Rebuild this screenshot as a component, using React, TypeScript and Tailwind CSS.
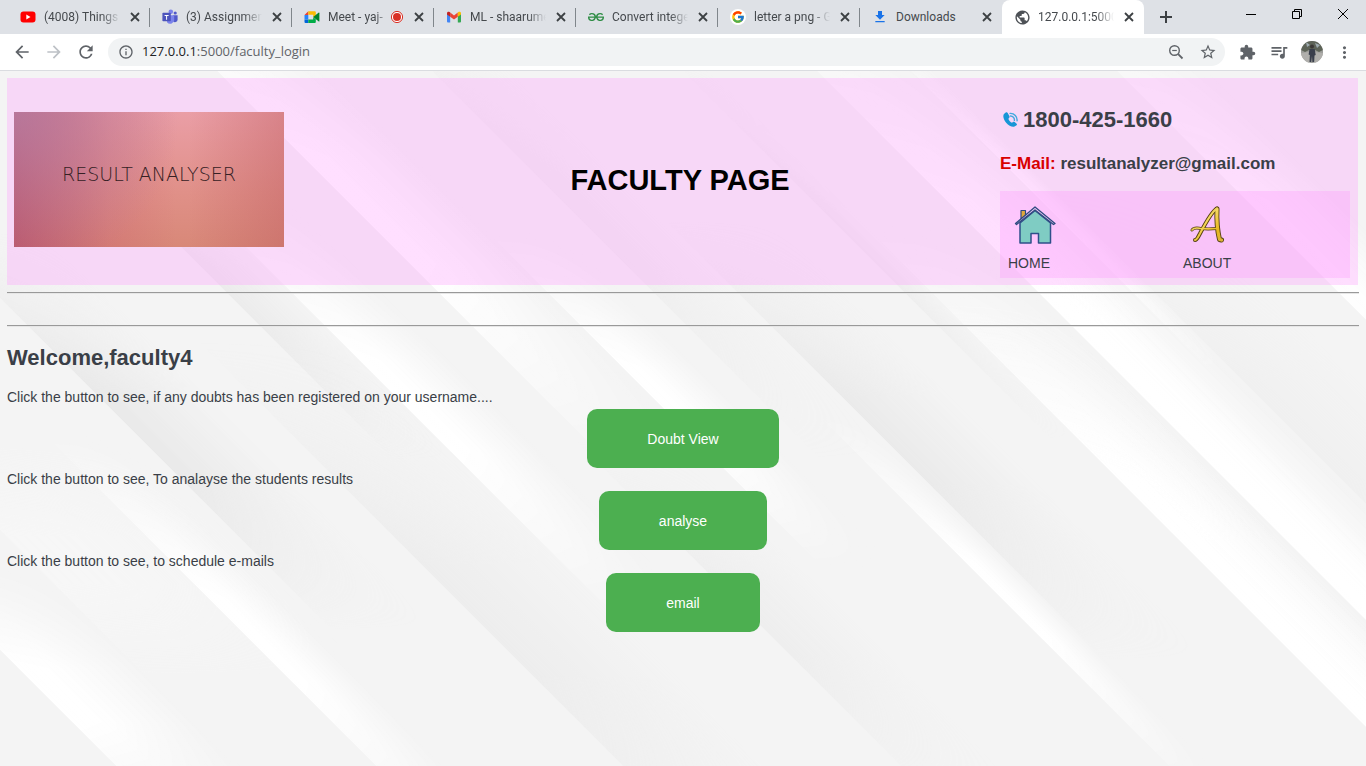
import React from "react";
import {
  MdArrowBack,
  MdArrowForward,
  MdRefresh,
  MdInfoOutline,
  MdStarBorder,
  MdExtension,
  MdQueueMusic,
  MdMoreVert,
  MdPublic,
  MdFileDownload,
} from "react-icons/md";
import { FcGoogle } from "react-icons/fc";
import { SiGeeksforgeeks } from "react-icons/si";

/* ---------- Tab icons ---------- */

const YoutubeIcon = () => (
  <svg viewBox="0 0 16 16" className="size-4">
    <rect x="0.5" y="2.5" width="15" height="11" rx="3" fill="#f00" />
    <path d="M6.3 5.6v4.8L10.5 8z" fill="#fff" />
  </svg>
);

const TeamsIcon = () => (
  <svg viewBox="0 0 16 16" className="size-4">
    <circle cx="13.2" cy="4" r="1.6" fill="#5059c9" />
    <circle cx="8.8" cy="2.8" r="2.3" fill="#7b83eb" />
    <path d="M11 6.3h4.6v4.4a2.5 2.5 0 0 1-4.6 1.3z" fill="#5059c9" />
    <path d="M5 6.3h7.2v5A4 4 0 0 1 5 13.2z" fill="#7b83eb" />
    <rect x="0.4" y="3.8" width="8.4" height="8.4" rx="0.8" fill="#4b53bc" />
    <path d="M2.6 5.9h4v1H5.1v3.8H4.1V6.9H2.6z" fill="#fff" />
  </svg>
);

const MeetIcon = () => (
  <svg viewBox="0 0 16 16" className="size-4">
    <path d="M0.5 6 4.3 2.3V6z" fill="#ea4335" />
    <path d="M4.3 2.3h6.5q1 0 1 1v3L9.2 8.4V5.8H4.3z" fill="#fbbc04" />
    <path d="M0.5 6h3.8v4.4H0.5z" fill="#2684fc" />
    <path d="M0.5 10.4h3.8v3.5H1.5q-1 0-1-1z" fill="#0066da" />
    <path d="M4.3 10.4h4.9V8.2l2.6 2v2.7q0 1-1 1H4.3z" fill="#00ac47" />
    <path d="M9.2 8.1 14.5 3.8q.9-.5.9.4v7.7q0 .9-.9.4z" fill="#00832d" />
  </svg>
);

const GmailIcon = () => (
  <svg viewBox="0 0 16 16" className="size-4">
    <path d="M1 4.2v8.2q0 1 1 1h2.2V7z" fill="#4285f4" />
    <path d="M15 4.2v8.2q0 1-1 1h-2.2V7z" fill="#34a853" />
    <path d="M4.2 3.6v4.2L8 10.6l3.8-2.8V3.6L8 6.4z" fill="#ea4335" />
    <path d="M1 5.4V4.2C1 2.6 2.6 2.3 3.6 3l.6.6v4.2z" fill="#c5221f" />
    <path d="M15 5.4V4.2c0-1.6-1.6-1.9-2.6-1.2l-.6.6v4.2z" fill="#fbbc04" />
  </svg>
);

const GoogleIcon = () => (
  <span className="flex size-4 items-center justify-center rounded-full bg-white">
    <FcGoogle className="size-[14px]" />
  </span>
);

const GlobeIcon = () => (
  <span className="flex size-4 items-center justify-center">
    <MdPublic className="size-[17px] shrink-0 text-[#4d5156]" />
  </span>
);

const RecordIcon = () => (
  <svg viewBox="0 0 14 14" className="size-[14px] shrink-0">
    <circle cx="7" cy="7" r="5.6" fill="#fff" stroke="#d93025" strokeWidth="1" />
    <circle cx="7" cy="7" r="4" fill="#d93025" />
  </svg>
);

const CloseIcon = () => (
  <svg viewBox="0 0 14 14" className="size-[14px]">
    <path d="M3 3l8 8M11 3l-8 8" stroke="#3c4043" strokeWidth="1.8" />
  </svg>
);

const ZoomOutIcon = () => (
  <svg viewBox="0 0 16 16" className="size-4" fill="none" stroke="#5f6368">
    <circle cx="6.5" cy="6.5" r="4.8" strokeWidth="1.4" />
    <path d="M4.200 6.500h4.600" strokeWidth="1.200" />
    <path d="M10.200 10.200l4.300 4.300" strokeWidth="1.800" />
  </svg>
);

type Tab = {
  title: string;
  icon: React.ReactNode;
  recording?: boolean;
  active?: boolean;
  line: boolean;
};

const tabs: Tab[] = [
  { title: "(4008) Things v", icon: <YoutubeIcon />, line: true },
  { title: "(3) Assignment", icon: <TeamsIcon />, line: true },
  { title: "Meet - yaj-", icon: <MeetIcon />, recording: true, line: true },
  { title: "ML - shaarume", icon: <GmailIcon />, line: true },
  { title: "Convert intege", icon: <SiGeeksforgeeks className="size-4 text-[#2f8d46]" />, line: true },
  { title: "letter a png - G", icon: <GoogleIcon />, line: true },
  { title: "Downloads", icon: <MdFileDownload className="size-[18px] text-[#1a73e8]" />, line: false },
  { title: "127.0.0.1:5000/", icon: <GlobeIcon />, active: true, line: false },
];

function TabStrip() {
  return (
    <div className="flex h-[34px] bg-[#dee1e6] pl-2">
      <div role="tablist" className="flex min-w-0">
        {tabs.map((t) => (
          <div
            key={t.title}
            className={
              t.active
                ? "relative flex w-[142px] min-w-0 items-center rounded-t-lg bg-white pr-2 pl-3"
                : "relative flex w-[142px] min-w-0 items-center pr-2 pl-3"
            }
          >
            <span className="mr-2 flex size-4 shrink-0 items-center justify-center">{t.icon}</span>
            <button
              role="tab"
              aria-selected={!!t.active}
              className={
                t.title === "Downloads"
                  ? "min-w-0 flex-1 text-left font-['Roboto',sans-serif] text-xs whitespace-nowrap text-[#45494d]"
                  : "min-w-0 flex-1 text-left font-['Roboto',sans-serif] text-xs whitespace-nowrap text-[#45494d] [mask-image:linear-gradient(to_right,#000_76%,transparent)]"
              }
            >
              {t.title}
            </button>
            {t.recording && <RecordIcon />}
            <button aria-label="Close tab" className="ml-2 shrink-0">
              <CloseIcon />
            </button>
            {t.line && <span className="absolute top-2 right-0 h-[19px] w-px bg-[#80868b]" />}
          </div>
        ))}
      </div>
      <button aria-label="New tab" className="ml-2 flex w-7 items-center justify-center">
        <svg viewBox="0 0 12 12" className="size-3">
          <path d="M6 0v12M0 6h12" stroke="#3c4043" strokeWidth="2" />
        </svg>
      </button>
      <div className="ml-auto flex h-7">
        <button aria-label="Minimize" className="flex w-[46px] items-center justify-center">
          <svg viewBox="0 0 10 10" className="size-[10px]">
            <path d="M0 5.5h10" stroke="#000" />
          </svg>
        </button>
        <button aria-label="Restore" className="flex w-[46px] items-center justify-center">
          <svg viewBox="0 0 10 10" className="size-[10px]" fill="none" stroke="#000">
            <path d="M0.5 2.5h7v7h-7zM2.5 2.5v-2h7v7h-2" />
          </svg>
        </button>
        <button aria-label="Close" className="flex w-[46px] items-center justify-center">
          <svg viewBox="0 0 10 10" className="size-[10px]">
            <path d="M0 0l10 10M10 0L0 10" stroke="#000" />
          </svg>
        </button>
      </div>
    </div>
  );
}

function Toolbar() {
  return (
    <div className="flex h-[37px] items-center border-b border-[#dadce0] bg-white px-3 text-[#5f6368]">
      <button aria-label="Back" className="mr-3">
        <MdArrowBack className="size-5" />
      </button>
      <button aria-label="Forward" className="mr-3 text-[#bdc1c6]">
        <MdArrowForward className="size-5" />
      </button>
      <button aria-label="Reload" className="mr-3">
        <MdRefresh className="size-5" />
      </button>
      <div className="flex h-7 min-w-0 flex-1 items-center rounded-full bg-[#f1f3f4] pr-2 pl-[10px]">
        <MdInfoOutline className="mr-2 size-4 shrink-0" />
        <a href="#address" className="min-w-0 flex-1 truncate text-[13px]">
          <span className="text-[#202124]">127.0.0.1</span>:5000/faculty_login
        </a>
        <button aria-label="Zoom" className="mr-[15px]">
          <ZoomOutIcon />
        </button>
        <button aria-label="Bookmark this page">
          <MdStarBorder className="size-[18px]" />
        </button>
      </div>
      <button aria-label="Extensions" className="ml-[14px]">
        <MdExtension className="size-[17px]" />
      </button>
      <button aria-label="Media controls" className="ml-[13px]">
        <MdQueueMusic className="size-5" />
      </button>
      <button aria-label="Profile" className="ml-3">
        <svg viewBox="0 0 22 22" className="size-[22px]">
          <defs>
            <clipPath id="avatar">
              <circle cx="11" cy="11" r="11" />
            </clipPath>
          </defs>
          <g clipPath="url(#avatar)">
            <rect width="22" height="22" fill="#9b9c99" />
            <path d="M0 0h22v9l-4 2-4-2H8l-4 2-4-2z" fill="#5d6357" />
            <path d="M5 1l4 3-3 2zM14 2l5 2-3 3z" fill="#9fabb0" />
            <path d="M0 12l8-1v11H0zM14 11l8 1v10h-8z" fill="#b0afac" />
            <circle cx="11" cy="5.5" r="2" fill="#3c3836" />
            <path d="M8.5 8h5.2l1 6-1.3.5L13 21h-1.6L11 15l-.8 6H8.6L9 14l-1.4-.4z" fill="#3a3f4c" />
          </g>
        </svg>
      </button>
      <button aria-label="Menu" className="ml-3">
        <MdMoreVert className="size-[19px]" />
      </button>
    </div>
  );
}

/* ---------- Diagonal light backdrop ---------- */

type Streak = {
  x: number; // offset of the edge on the 45° axis
  w: number;
  y: number;
  h: number;
  fill: "light" | "dark";
  a: number;
  fade: "in" | "both";
};

const streaks: Streak[] = [
  { x: -650, w: 125, y: 560, h: 270, fill: "light", a: 1, fade: "both" },
  { x: -530, w: 230, y: 440, h: 240, fill: "light", a: 0.25, fade: "both" },
  { x: -390, w: 70, y: 430, h: 420, fill: "light", a: 1, fade: "both" },
  { x: -298, w: 110, y: 230, h: 400, fill: "dark", a: 0.45, fade: "both" },
  { x: -143, w: 145, y: 340, h: 560, fill: "dark", a: 0.28, fade: "both" },
  { x: -66, w: 66, y: 140, h: 320, fill: "dark", a: 0.35, fade: "both" },
  { x: -1, w: 90, y: 180, h: 450, fill: "light", a: 1, fade: "both" },
  { x: 135, w: 100, y: 440, h: 360, fill: "dark", a: 0.25, fade: "both" },
  { x: 146, w: 110, y: -60, h: 540, fill: "light", a: 1, fade: "both" },
  { x: 255, w: 75, y: 230, h: 340, fill: "light", a: 1, fade: "both" },
  { x: 361, w: 80, y: -20, h: 480, fill: "dark", a: 0.22, fade: "both" },
  { x: 403, w: 42, y: 410, h: 380, fill: "light", a: 1, fade: "both" },
  { x: 445, w: 110, y: 220, h: 440, fill: "dark", a: 0.4, fade: "both" },
  { x: 612, w: 28, y: 60, h: 380, fill: "dark", a: 0.25, fade: "both" },
  { x: 639, w: 107, y: 220, h: 1300, fill: "light", a: 1, fade: "in" },
  { x: 639, w: 107, y: 300, h: 1200, fill: "light", a: 0.7, fade: "in" },
  { x: 746, w: 112, y: 0, h: 1000, fill: "light", a: 1, fade: "in" },
  { x: 746, w: 80, y: 200, h: 600, fill: "light", a: 0.8, fade: "in" },
  { x: 840, w: 22, y: 40, h: 330, fill: "light", a: 0.9, fade: "both" },
  { x: 862, w: 120, y: 180, h: 500, fill: "dark", a: 0.16, fade: "both" },
  { x: 1046, w: 90, y: 0, h: 500, fill: "light", a: 0.95, fade: "both" },
];

function Backdrop() {
  return (
    <svg
      aria-hidden="true"
      viewBox="0 71 1366 695"
      preserveAspectRatio="xMinYMin slice"
      className="absolute inset-0 -z-10 size-full bg-[#f4f4f4]"
    >
      <defs>
        <linearGradient id="light">
          <stop offset="0" stopColor="#fff" />
          <stop offset="0.3" stopColor="#fff" stopOpacity="0.9" />
          <stop offset="1" stopColor="#fff" stopOpacity="0" />
        </linearGradient>
        <linearGradient id="dark">
          <stop offset="0" stopColor="#dcdcdc" />
          <stop offset="1" stopColor="#dcdcdc" stopOpacity="0" />
        </linearGradient>
        <linearGradient id="ramp-both" x2="0" y2="1">
          <stop offset="0" stopColor="#000" />
          <stop offset="0.4" stopColor="#fff" />
          <stop offset="0.6" stopColor="#fff" />
          <stop offset="1" stopColor="#000" />
        </linearGradient>
        <linearGradient id="ramp-in" x2="0" y2="1">
          <stop offset="0" stopColor="#000" />
          <stop offset="0.2" stopColor="#fff" />
        </linearGradient>
        <mask id="both" maskContentUnits="objectBoundingBox">
          <rect width="1" height="1" fill="url(#ramp-both)" />
        </mask>
        <mask id="in" maskContentUnits="objectBoundingBox">
          <rect width="1" height="1" fill="url(#ramp-in)" />
        </mask>
      </defs>
      <g transform="skewX(45)">
        {streaks.map((s, i) => (
          <rect
            key={i}
            x={s.x}
            y={s.y}
            width={s.w}
            height={s.h}
            opacity={s.a}
            fill={`url(#${s.fill})`}
            mask={`url(#${s.fade})`}
          />
        ))}
      </g>
    </svg>
  );
}

/* ---------- Page ---------- */

const PhoneIcon = () => (
  <svg viewBox="0 0 20 20" className="mr-px size-[22px]" fill="none">
    <path
      d="M5.2 3.2 3.6 4.6C2.4 6.2 3.2 9.6 5.6 12.4s5.6 4.3 7.6 3.5l1.9-1.2c.5-.4.4-.9 0-1.3l-2-1.7c-.5-.3-.9-.2-1.300.1l-.9.7c-1.200-.4-3-2.400-3.300-3.700l.8-.9c.4-.4.4-.8.2-1.300L7 3.600c-.4-.7-1.200-.9-1.800-.4z"
      fill="#1796d6"
    />
    <path
      d="M9.5 6.3a3.6 3.6 0 0 1 3.6 4M9.2 4a6 6 0 0 1 6.300 6.700"
      stroke="#43a9de"
      strokeWidth="1.3"
      strokeLinecap="round"
    />
  </svg>
);

const HouseIcon = () => (
  <svg viewBox="0 0 54 54" className="size-[54px]" strokeLinejoin="round">
    <path d="M13 20v-8.500h4.500v5z" fill="#e0a93b" stroke="#2f4a80" strokeWidth="1.2" />
    <path d="M12 44V24L27 11.500 42.500 24v20h-12V34.500h-7.500V44z" fill="#7fccc3" stroke="#2f4f8a" strokeWidth="1.5" />
    <path d="M7.500 24.500 27 8l20 16.500-1.500 1L27 11 8.500 25.500z" fill="#e9c9f5" stroke="#2f4a80" strokeWidth="1.3" />
  </svg>
);

const GoldLetterIcon = () => (
  <svg viewBox="0 0 54 54" className="size-[54px]" fill="none" strokeLinecap="round" strokeLinejoin="round">
    <defs>
      <linearGradient id="gold" gradientUnits="userSpaceOnUse" x1="8" y1="8" x2="42" y2="44">
        <stop offset="0" stopColor="#8a6a10" />
        <stop offset="0.4" stopColor="#f6d860" />
        <stop offset="0.7" stopColor="#e8b820" />
        <stop offset="1" stopColor="#d8b040" />
      </linearGradient>
    </defs>
    <g stroke="#54400f">
      <path d="M12 41c2 0 3-3 5-6.500C22 25 29 12 34 9.500" strokeWidth="4" />
      <path d="M34 10c-.5 11 .5 22 2.500 30.500l2 .5" strokeWidth="5" />
      <path d="M9 31c2-3 5-2 9-1.500s10 .5 16 0" strokeWidth="3" />
    </g>
    <g stroke="url(#gold)">
      <path d="M12 41c2 0 3-3 5-6.500C22 25 29 12 34 9.500" strokeWidth="2" />
      <path d="M34 10c-.5 11 .5 22 2.500 30.500l2 .5" strokeWidth="3.2" />
      <path d="M9 31c2-3 5-2 9-1.500s10 .5 16 0" strokeWidth="1.6" />
    </g>
  </svg>
);

const actions = [
  { text: "Click the button to see, if any doubts has been registered on your username....", label: "Doubt View" },
  { text: "Click the button to see, To analayse the students results", label: "analyse" },
  { text: "Click the button to see, to schedule e-mails", label: "email" },
];

const Rule = ({ className }: { className: string }) => (
  <hr className={`h-[2px] border-t border-b border-t-[#999] border-b-[#e6e6e6] ${className}`} />
);

export default function App() {
  return (
    <div className="flex min-h-screen flex-col font-['Open_Sans',sans-serif]">
      <TabStrip />
      <Toolbar />
      <main className="relative isolate flex-1 overflow-hidden px-[7px] pt-[7px] pb-8 font-['Liberation_Sans',Arial,sans-serif] text-sm text-[#3a3f47]">
        <Backdrop />
        <header className="mr-px grid grid-cols-[350px_1fr_350px] items-center bg-[rgba(255,150,255,0.3)] pr-2 pl-[7px]">
          <div className="mb-1 flex h-[135px] w-[270px] items-center justify-center bg-[radial-gradient(circle_at_0%_0%,rgba(180,130,170,0.7),transparent_55%),linear-gradient(to_right,rgba(178,70,100,0.75),rgba(200,90,110,0.3)_35%,transparent_60%),linear-gradient(to_left,rgba(190,90,95,0.4),transparent_35%),linear-gradient(to_bottom,#ea9ea6,#e09088_60%,#d88878)] pb-[10px]">
            <span className="font-['DejaVu_Sans',sans-serif] text-[19px] font-extralight text-[#352024]">
              RESULT ANALYSER
            </span>
          </div>
          <h1 className="pr-1 pb-1 text-center text-[29px] leading-9 font-bold text-black">FACULTY PAGE</h1>
          <div className="pt-[26px] pb-[7px]">
            <p className="flex items-center text-[22px] leading-8 font-bold">
              <PhoneIcon />
              1800-425-1660
            </p>
            <p className="mt-4 text-[17px] leading-6 font-bold">
              <span className="text-[#d90000]">E-Mail:</span> resultanalyzer@gmail.com
            </p>
            <nav className="mt-[15px] grid h-[87px] grid-cols-2 bg-[rgba(255,150,255,0.3)] px-2 pt-2">
              <a href="#home" className="leading-5">
                <HouseIcon />
                HOME
              </a>
              <a href="#about" className="pl-2 leading-5">
                <GoldLetterIcon />
                ABOUT
              </a>
            </nav>
          </div>
        </header>
        <Rule className="mt-[7px]" />
        <Rule className="mt-[31px]" />
        <h2 className="mt-[15px] text-[22px] leading-8 font-bold">Welcome,faculty4</h2>
        <div className="mt-3">
          {actions.map((a) => (
            <section key={a.label}>
              <p className="leading-[23px]">{a.text}</p>
              <button className="mx-auto block h-[59px] rounded-[10px] bg-[#4caf50] px-[60px] text-white">
                {a.label}
              </button>
            </section>
          ))}
        </div>
      </main>
    </div>
  );
}
